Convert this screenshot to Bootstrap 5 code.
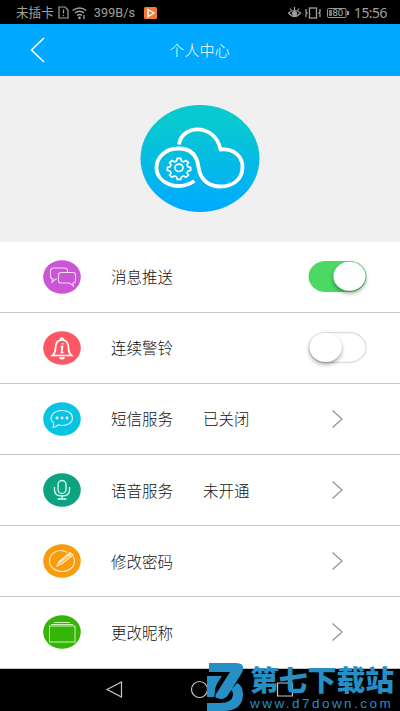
<!DOCTYPE html>
<html lang="zh-CN">
<head>
<meta charset="utf-8">
<meta name="viewport" content="width=device-width, initial-scale=1">
<title>个人中心</title>
<link href="https://cdn.jsdelivr.net/npm/bootstrap@5.3.0/dist/css/bootstrap.min.css" rel="stylesheet">
<style>
body{font-family:"Liberation Sans","Noto Sans CJK SC",sans-serif;background:#fff;color:#111;width:400px;height:711px;overflow:hidden}
svg{display:block;flex:none;overflow:visible}
.status{height:24px;background:#000;color:#a0a0a0;font:12.6px/22px Roboto,"Noto Sans CJK SC",sans-serif;padding:1px 13px 0 16px}
.status .speed{margin-left:7px;margin-right:9px;letter-spacing:.1px}
.status .clock{font:13.8px/22px "Noto Sans",sans-serif;margin-left:5px;letter-spacing:-.45px}
.topbar{height:52px;background:#00a9ff;color:#fff;padding:0 170px 0 30px}
.topbar h1{font-size:15px;font-weight:300;line-height:20px;letter-spacing:.2px;padding-top:1px}
.hero{height:165.500px;background:#f0f0f0;padding-top:29px}
.settings{height:427px}
.item{flex:1 1 0;border-bottom:1px solid #c4c4c4;padding:0 33px 0 43px}
.item .title{width:92px;margin-left:30px}
.item .title,.item .state{font-size:15.5px;font-weight:300;line-height:22px;white-space:nowrap;padding-top:3px}
.more{margin-right:24px}
.android{height:42.500px;background:#000;position:relative}
.android .keys{padding-left:106px;padding-top:12px}
.brand{position:absolute;left:207px;bottom:0;color:#268fc5}
.brand .name{font-size:28.800px;line-height:30px;font-weight:900;white-space:nowrap}
.brand .site{font-size:13.500px;line-height:15px;letter-spacing:2.450px;white-space:nowrap}
</style>
</head>
<body class="d-flex flex-column">
<div class="status d-flex align-items-center flex-shrink-0">
  <span>未插卡</span>
  <svg class="ms-1" width="11" height="13" viewBox="0 0 11 13" fill="none" stroke="#a0a0a0" stroke-width="1.2"><path d="M1 1h6l3 3v8H1zM5.500 3.500v4M5.500 9v1.300"/></svg>
  <svg style="margin-left:3px" width="15" height="12" viewBox="0 0 15 12" fill="none" stroke="#a0a0a0" stroke-width="1.3"><path d="M.5 3.500Q7.500-1.500 14.500 3.500M3 6q4.500-3.500 9 0M5 8.500q2.500-2 5 0"/><circle cx="7.500" cy="10.800" r=".7" fill="#a0a0a0"/><path d="M12 8v4"/></svg>
  <span class="speed">399B/s</span>
  <svg width="13" height="12" viewBox="0 0 13 12"><rect width="13" height="12" rx="1.500" fill="#ef7935"/><path d="M4 2.500 10 6 4 9.500z" fill="none" stroke="#fff" stroke-width="1.400"/></svg>
  <svg class="ms-auto" width="13" height="11" viewBox="0 0 13 11" fill="none" stroke="#a0a0a0" stroke-width="1.200"><path d="M.5 6Q6.500 1 12.500 6 6.500 13 .5 6zM2 1.500 3.500 3.500M6.500 0v3M11 1.500 9.500 3.500"/><circle cx="6.500" cy="6.500" r="2" fill="#a0a0a0"/></svg>
  <svg class="ms-1" width="16" height="12" viewBox="0 0 16 12" fill="none" stroke="#a0a0a0" stroke-width="1.300"><rect x="4.500" y="1" width="7" height="10"/><path d="M1 2v3l1 1-1 1v3M15 2v3l-1 1 1 1v3"/></svg>
  <svg style="margin-left:6px" width="22" height="10" viewBox="0 0 22 10"><rect x=".5" y=".5" width="18.500" height="9" rx="1" fill="none" stroke="#999"/><path d="M2 2h3v6H2z" fill="#777"/><path d="M20 3h2v4h-2z" fill="#999"/><text x="5.500" y="8.400" font-size="9.500" fill="#b5b5b5">80</text></svg>
  <span class="clock">15:56</span>
</div>

<header class="topbar d-flex align-items-center justify-content-between flex-shrink-0">
  <svg width="15" height="26" viewBox="0 0 15 26" fill="none" stroke="#fff" stroke-width="1.600"><path d="M14 1 1.500 13 14 25"/></svg>
  <h1 class="m-0">个人中心</h1>
</header>

<section class="hero flex-shrink-0">
  <svg class="mx-auto" width="120" height="107" viewBox="0 0 120 107">
    <defs><linearGradient id="sky" x1="0" y1="0" x2="0" y2="1"><stop offset=".15" stop-color="#08c9cf"/><stop offset="1" stop-color="#00aaff"/></linearGradient></defs>
    <ellipse cx="60" cy="53.500" rx="59.500" ry="53.500" fill="url(#sky)"/>
    <g fill="none" stroke="#fff" stroke-width="3.800" stroke-linejoin="round">
      <path d="M39 39.500C42 19 75 18 80.500 44.500C94 43 102.500 52 102.500 62C102.500 75 92 81.500 80.500 81.500C68 81.500 60 74 58.500 62C57 50 50 43.500 38.500 43.500C25 43.500 16.500 53 16.500 62.500C16.500 78 37 87 54.500 76"/>
    </g>
    <g fill="none" stroke="#fff" stroke-width="1.700" transform="translate(0 .3)"><ellipse cx="39" cy="62.500" rx="4" ry="3.700"/><path d="M37.300 53h3.400l.8 2.700 2 .8 2.500-1.300 2.400 2-1.400 2.300.9 1.900 2.700.7v3l-2.700.7-.9 1.900 1.400 2.200-2.400 2.100-2.500-1.300-2 .8-.8 2.600h-3.400l-.8-2.600-2-.8-2.500 1.300-2.400-2.100 1.400-2.200-.9-1.900-2.700-.7v-3l2.700-.7.9-1.900-1.400-2.300 2.400-2 2.500 1.300 2-.8z"/></g>
  </svg>
</section>

<main class="settings d-flex flex-column flex-shrink-0">
  <div class="item d-flex align-items-center">
    <svg width="38" height="34" viewBox="0 0 38 34"><ellipse cx="19" cy="17" rx="18.800" ry="16.800" fill="#cc55d5"/><g fill="none" stroke="#f5d5f8" stroke-width="1.100"><path d="M14 19h-1l-4 3 1-3q-2.500 0-2.500-3v-5q0-3 3-3h11q3 0 3 3v1.500"/><path d="M18 12.500h12q2.500 0 2.500 2.500v5.500q0 2.500-2.500 2.500l.5 3-4-3H18q-2.500 0-2.500-2.500V15q0-2.500 2.500-2.500z"/></g></svg>
    <span class="title">消息推送</span>
    <svg class="ms-auto" width="59" height="34" viewBox="0 0 59 34"><defs><filter id="shade" x="-30%" y="-30%" width="160%" height="180%"><feDropShadow dx="0" dy="2.500" stdDeviation="2" flood-opacity=".38"/></filter></defs><rect x=".5" y="1" width="58" height="31" rx="17" ry="15.500" fill="#4bd964"/><ellipse cx="41.500" cy="16.300" rx="16" ry="14.500" fill="#fff" filter="url(#shade)"/></svg>
  </div>
  <div class="item d-flex align-items-center">
    <svg width="38" height="34" viewBox="0 0 38 34"><ellipse cx="19" cy="17" rx="18.800" ry="16.800" fill="#fc5864"/><g fill="none" stroke="#fff" stroke-width="1.700"><path d="M9.500 24.500q3-2.500 3-7 0-8.500 6.500-8.500t6.500 8.500q0 4.500 3 7zM17.500 9q0-2 1.500-2t1.500 2M16.500 26.500q2.500 2 5 0"/><path d="M17.500 15.500h2l-1 6h2M19.500 12v1.500"/></g></svg>
    <span class="title">连续警铃</span>
    <svg class="ms-auto" width="59" height="34" viewBox="0 0 59 34"><rect x="1" y="1.500" width="57" height="30" rx="17" ry="15" fill="#fff" stroke="#dedede" stroke-width="1.300"/><ellipse cx="17.500" cy="16.300" rx="16" ry="14.500" fill="#fff" filter="url(#shade)"/></svg>
  </div>
  <div class="item d-flex align-items-center">
    <svg width="38" height="34" viewBox="0 0 38 34"><ellipse cx="19" cy="17" rx="18.800" ry="16.800" fill="#08c4e2"/><path d="M10.500 21C5 16 10 8.500 19 8.500c6 0 10.500 3 10.500 7.500S25 23.500 19 23.500q-2 0-4-.7-2 2.500-5 2.400 1.500-1.500.5-4.200z" fill="none" stroke="#d5faff" stroke-width="1.100"/><g fill="#fff"><circle cx="14" cy="16" r="1.400"/><circle cx="19" cy="16" r="1.400"/><circle cx="24" cy="16" r="1.400"/></g></svg>
    <span class="title">短信服务</span><span class="state">已关闭</span>
    <svg class="more ms-auto" width="12" height="18" viewBox="0 0 12 18" fill="none" stroke="#929292" stroke-width="1.200"><path d="M1.500.5 11 9 1.500 17.500"/></svg>
  </div>
  <div class="item d-flex align-items-center">
    <svg width="38" height="34" viewBox="0 0 38 34"><ellipse cx="19" cy="17" rx="18.800" ry="16.800" fill="#0da380"/><g fill="none" stroke="#d5fff3" stroke-width="1.300"><rect x="15" y="7.500" width="8" height="13" rx="4"/><path d="M11.500 14v3q0 6 7.500 6t7.500-6v-3M19 23v3M14.500 26h9"/></g></svg>
    <span class="title">语音服务</span><span class="state">未开通</span>
    <svg class="more ms-auto" width="12" height="18" viewBox="0 0 12 18" fill="none" stroke="#929292" stroke-width="1.200"><path d="M1.500.5 11 9 1.500 17.500"/></svg>
  </div>
  <div class="item d-flex align-items-center">
    <svg width="38" height="34" viewBox="0 0 38 34"><ellipse cx="19" cy="17" rx="18.800" ry="16.800" fill="#fa9b0c"/><g fill="none" stroke="#fff0cf" stroke-width="1.100"><path d="M24 8.200C15 3.500 6.500 9.500 6.500 17c0 6 5.500 10.500 12.500 10.500S31.500 23 31.500 17q0-2.500-1.500-4.500"/><path d="M14 22 16 17.500 27 8.500 30 11 18.500 20zM25 10l3 2.700M16 19.500 27.500 10"/></g></svg>
    <span class="title">修改密码</span>
    <svg class="more ms-auto" width="12" height="18" viewBox="0 0 12 18" fill="none" stroke="#929292" stroke-width="1.200"><path d="M1.500.5 11 9 1.500 17.500"/></svg>
  </div>
  <div class="item d-flex align-items-center">
    <svg width="38" height="34" viewBox="0 0 38 34"><ellipse cx="19" cy="17" rx="18.800" ry="16.800" fill="#34b507"/><g fill="none" stroke="#c6f5b5" stroke-width="1"><rect x="6.500" y="11" width="25.500" height="16"/><path d="M8 9.500h22M11 7.500h16"/></g></svg>
    <span class="title">更改昵称</span>
    <svg class="more ms-auto" width="12" height="18" viewBox="0 0 12 18" fill="none" stroke="#929292" stroke-width="1.200"><path d="M1.500.5 11 9 1.500 17.500"/></svg>
  </div>
</main>

<footer class="android flex-shrink-0">
  <div class="keys">
    <svg width="188" height="17" viewBox="0 0 188 17" fill="none" stroke="#c8c8c8" stroke-width="1.200"><path d="M15.500 1v15L1 8.500z"/><circle cx="93.500" cy="8.500" r="8"/><path d="M171.500 2h15v13h-15z"/></svg>
  </div>
  <div class="brand d-flex align-items-end">
    <svg width="38" height="48" viewBox="0 0 38 48"><path d="M2 0h27q8 0 7 6 0 3-3 7L21 32q-4 6-11 3-3-1-1-4L23 9H2zM0 13h15l-4 6q-4 7-3 11l-1 4H0zM30 20q6 3 6 11 0 17-20 17H0v-8h13q12 0 13-8 0-4-2-5z" fill="currentColor"/></svg>
    <div style="margin-left:5px"><div class="name">第七下载站</div><div class="site">www.d7down.com</div></div>
  </div>
</footer>
<script src="https://cdn.jsdelivr.net/npm/bootstrap@5.3.0/dist/js/bootstrap.bundle.min.js"></script>
</body>
</html>
